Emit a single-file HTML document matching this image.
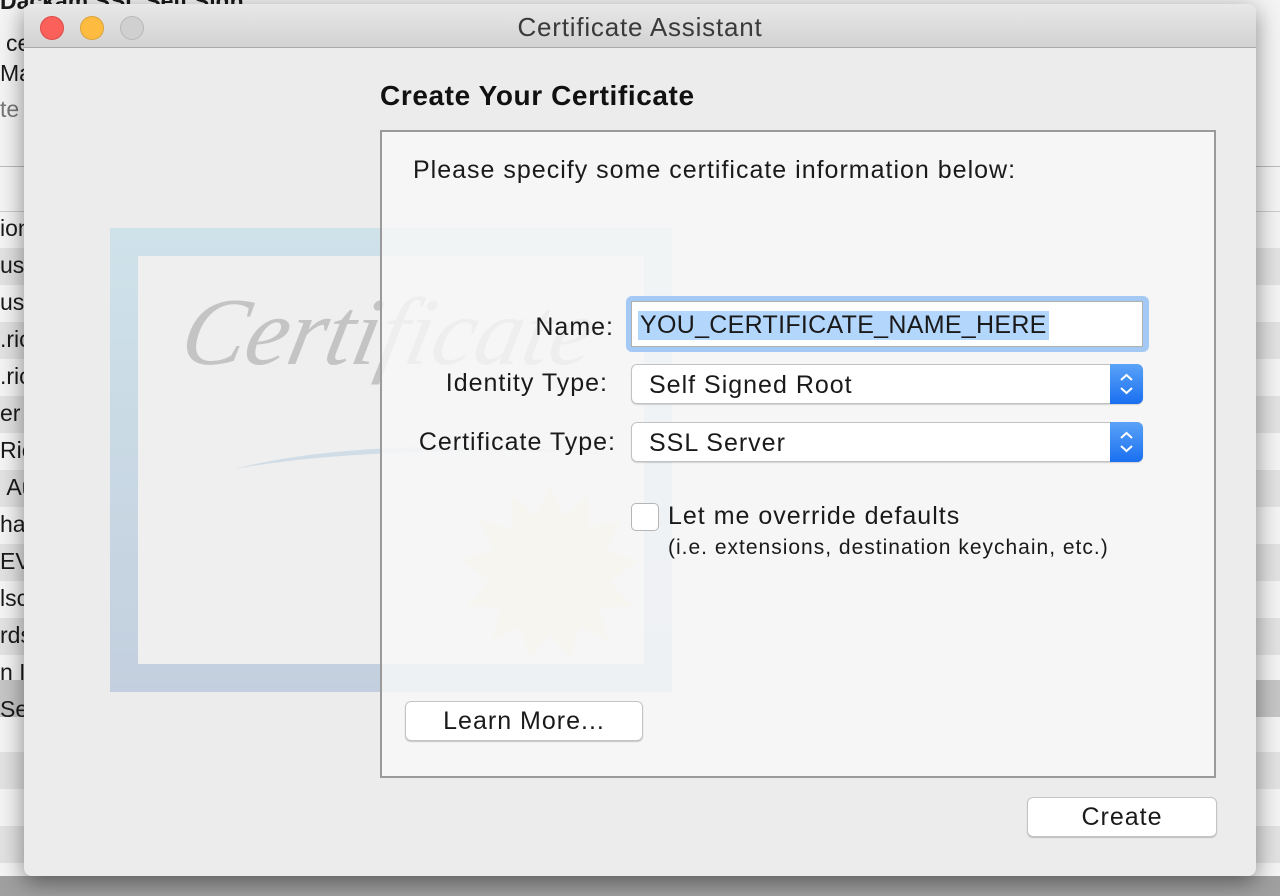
<!DOCTYPE html>
<html><head><meta charset="utf-8"><style>
*{margin:0;padding:0;box-sizing:border-box}
body{width:1280px;height:896px;overflow:hidden;position:relative;background:#f4f4f4;font-family:"Liberation Sans",sans-serif;color:#1a1a1a}
.abs{position:absolute}
.row{position:absolute;left:0;width:1280px;height:37px}
.win{position:absolute;left:24px;top:4px;width:1232px;height:872px;background:#ececec;border-radius:8px;box-shadow:0 6px 24px rgba(0,0,0,.45);overflow:hidden;letter-spacing:1px}
.tb{position:absolute;left:0;top:0;width:100%;height:44px;background:linear-gradient(#e9e8e9,#d3d2d3);border-bottom:1px solid #a9a9a9}
.dot{position:absolute;top:12px;width:24px;height:24px;border-radius:50%}
.lbl{position:absolute;font-size:25px;text-align:right}
.pop{position:absolute;left:607px;width:512px;height:40px;background:#fff;border:1px solid #c2c2c2;border-radius:6px;box-shadow:0 1px 1px rgba(0,0,0,.15);font-size:25px;padding:6px 0 0 17px}
.pop .ar{position:absolute;right:-1px;top:-1px;width:33px;height:40px;background:linear-gradient(#5aa3f8,#1a6ff0);border-radius:0 6px 6px 0}
.btn{position:absolute;background:#fff;border:1px solid #c4c4c4;border-radius:6px;box-shadow:0 1px 1px rgba(0,0,0,.2);font-size:25px;text-align:center}
</style></head><body>
<div class="abs" style="left:0;top:-12px;font-size:23px;font-weight:bold">Dackam SSL Self Sign</div>
<div class="abs" style="left:6px;top:30px;font-size:23px">ce</div>
<div class="abs" style="left:0;top:60px;font-size:23px">Ma</div>
<div class="abs" style="left:0;top:96px;font-size:23px;color:#777">te</div>
<div class="abs" style="left:0;top:166px;width:1280px;height:1px;background:#bbb"></div>
<div class="abs" style="left:0;top:211px;width:1280px;height:1px;background:#ccc"></div>
<div class="row" style="top:248px;background:#e2e2e2"></div>
<div class="row" style="top:322px;background:#e2e2e2"></div>
<div class="row" style="top:396px;background:#e2e2e2"></div>
<div class="row" style="top:470px;background:#e2e2e2"></div>
<div class="row" style="top:544px;background:#e2e2e2"></div>
<div class="row" style="top:618px;background:#e2e2e2"></div>
<div class="row" style="top:680px;background:#c6c6c6"></div>
<div class="row" style="top:752px;background:#e2e2e2"></div>
<div class="row" style="top:826px;background:#e2e2e2"></div>
<div class="abs" style="left:0;top:210px;font-size:23px;line-height:37px">ion<br>usl<br>usl<br>.ric<br>.ric<br>er<br>Ric<br>&nbsp;Au<br>ha<br>EV<br>lsc<br>rds<br>n I<br>Self</div>
<div class="abs" style="left:0;top:876px;width:1280px;height:20px;background:#a0a0a0"></div>

<div class="win">
 <div class="tb">
  <div class="dot" style="left:16px;background:#fc605b;border:1px solid #de4a45"></div>
  <div class="dot" style="left:56px;background:#fdbc40;border:1px solid #dea236"></div>
  <div class="dot" style="left:96px;background:#d0d0d0;border:1px solid #b9b9b9"></div>
  <div class="abs" style="left:0;width:100%;top:8px;text-align:center;font-size:26px;color:#3a3a3a;letter-spacing:.8px">Certificate Assistant</div>
 </div>
 <div class="abs" style="left:86px;top:224px;width:562px;height:464px;background:linear-gradient(#cfe2ea,#c3cfde)"></div>
 <div class="abs" style="left:114px;top:252px;width:506px;height:408px;background:#efefef"></div>
 <div class="abs" style="left:160px;top:272px;font-family:'Liberation Serif',serif;font-style:italic;font-size:96px;color:#c4c4c4;transform:skewX(-12deg);letter-spacing:0">Certificate</div>
 <svg class="abs" style="left:200px;top:420px" width="400" height="60"><path d="M10 45 Q150 10 390 30 Q150 20 10 45Z" fill="#d0dce6"/></svg>
 <svg class="abs" style="left:436px;top:482px" width="180" height="180"><polygon fill="#efeacb" points="90,0 104,30 128,10 128,42 160,35 146,64 178,75 150,95 172,120 140,122 148,155 120,140 110,172 90,148 70,172 60,140 32,155 40,122 8,120 30,95 2,75 34,64 20,35 52,42 52,10 76,30"/></svg>
 <div class="abs" style="left:356px;top:76px;font-size:28px;font-weight:bold;color:#111;letter-spacing:.6px">Create Your Certificate</div>
 <div class="abs" style="left:356px;top:126px;width:836px;height:648px;border:2px solid #9a9a9a;background:rgba(248,248,248,.82)"></div>
 <div class="abs" style="left:389px;top:152px;font-size:25px">Please specify some certificate information below:</div>
 <div class="lbl" style="right:642px;top:309px">Name:</div>
 <div class="abs" style="left:602px;top:292px;width:523px;height:56px;background:#a5c9f5;border-radius:6px"></div>
 <div class="abs" style="left:607px;top:297px;width:512px;height:46px;background:#fff;border:1px solid #b0b0b0"></div>
 <div class="abs" style="left:614px;top:307px;font-size:25px;background:#b3d6fd;padding:0 2px;letter-spacing:.3px">YOU_CERTIFICATE_NAME_HERE</div>
 <div class="lbl" style="right:648px;top:365px">Identity Type:</div>
 <div class="pop" style="top:360px">Self Signed Root<div class="ar"><svg width="33" height="40"><path d="M11 16 L16.5 11 L22 16 M11 24 L16.5 29 L22 24" stroke="#fff" stroke-width="2" fill="none"/></svg></div></div>
 <div class="lbl" style="right:640px;top:424px">Certificate Type:</div>
 <div class="pop" style="top:418px">SSL Server<div class="ar"><svg width="33" height="40"><path d="M11 16 L16.5 11 L22 16 M11 24 L16.5 29 L22 24" stroke="#fff" stroke-width="2" fill="none"/></svg></div></div>
 <div class="abs" style="left:607px;top:499px;width:28px;height:28px;background:#fff;border:1px solid #b5b5b5;border-radius:5px"></div>
 <div class="abs" style="left:644px;top:498px;font-size:25px">Let me override defaults</div>
 <div class="abs" style="left:644px;top:532px;font-size:21px">(i.e. extensions, destination keychain, etc.)</div>
 <div class="btn" style="left:381px;top:697px;width:238px;height:40px;line-height:38px">Learn More...</div>
 <div class="btn" style="left:1003px;top:793px;width:190px;height:40px;line-height:38px">Create</div>
</div>
</body></html>
